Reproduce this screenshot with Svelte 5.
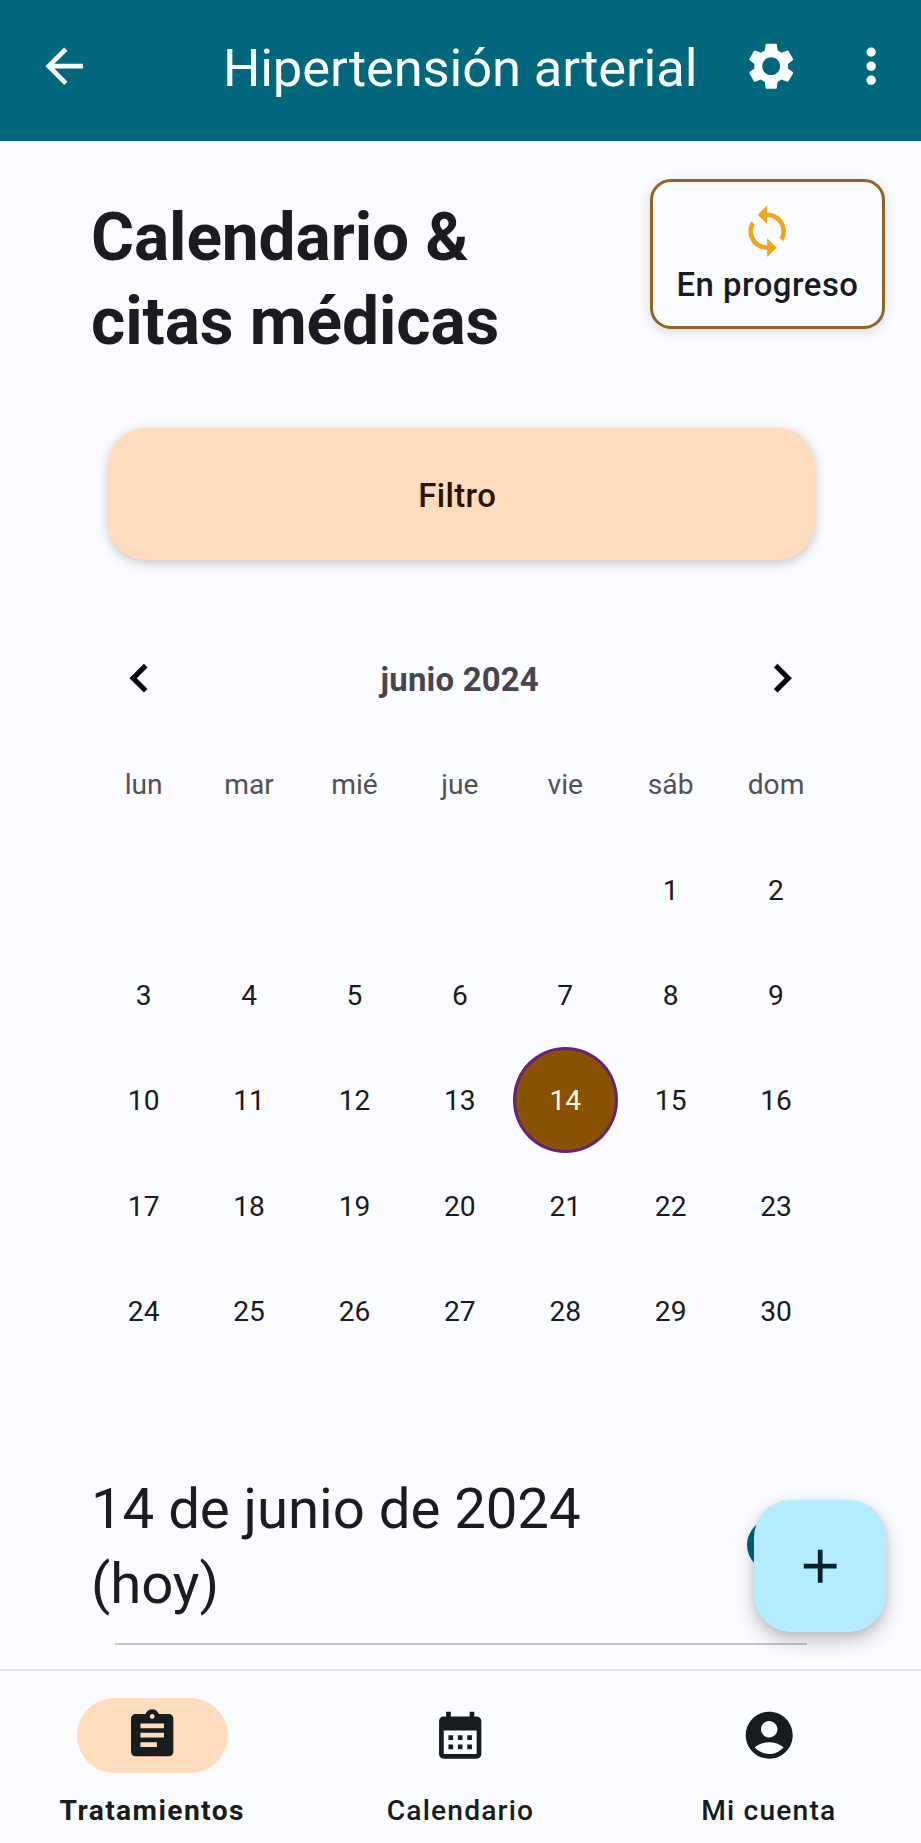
<script>
  const weekdays = ['lun', 'mar', 'mié', 'jue', 'vie', 'sáb', 'dom'];
  const leading = 5;
  const cells = [
    ...Array.from({ length: leading }, () => null),
    ...Array.from({ length: 30 }, (_, i) => i + 1)
  ];
  let selected = $state(14);

  const tabs = [
    {
      label: 'Tratamientos',
      icon: 'M19 3h-4.18C14.4 1.84 13.3 1 12 1s-2.4.84-2.82 2H5c-1.1 0-2 .9-2 2v14c0 1.1.9 2 2 2h14c1.1 0 2-.9 2-2V5c0-1.1-.9-2-2-2zm-7 0c.55 0 1 .45 1 1s-.45 1-1 1-1-.45-1-1 .45-1 1-1zm2 14H7v-2h7v2zm3-4H7v-2h10v2zm0-4H7V7h10v2z'
    },
    {
      label: 'Calendario',
      icon: 'M19 4h-1V2h-2v2H8V2H6v2H5c-1.11 0-1.99.9-1.99 2L3 20c0 1.1.89 2 2 2h14c1.1 0 2-.9 2-2V6c0-1.1-.9-2-2-2zm0 16H5V10h14v10zM9 14H7v-2h2v2zm4 0h-2v-2h2v2zm4 0h-2v-2h2v2zm-8 4H7v-2h2v2zm4 0h-2v-2h2v2zm4 0h-2v-2h2v2z'
    },
    {
      label: 'Mi cuenta',
      icon: 'M12 2C6.48 2 2 6.48 2 12s4.48 10 10 10 10-4.48 10-10S17.52 2 12 2zm0 4c1.93 0 3.5 1.57 3.5 3.5S13.93 13 12 13s-3.5-1.57-3.5-3.5S10.07 6 12 6zm0 14c-2.03 0-4.43-.82-6.14-2.88C7.55 15.8 9.68 15 12 15s4.45.8 6.14 2.12C16.43 19.18 14.03 20 12 20z'
    }
  ];
  let active = $state('Tratamientos');
</script>

{#snippet icon(d)}
  <svg class="icon" viewBox="0 0 24 24" aria-hidden="true"><path {d} /></svg>
{/snippet}

<div class="app">
  <header class="bar">
    <button>{@render icon('M20 11H7.83l5.59-5.59L12 4l-8 8 8 8 1.41-1.41L7.83 13H20v-2z')}</button>
    <span class="bar-title">Hipertensión arterial</span>
    <button>{@render icon('M19.14 12.94c.04-.3.06-.61.06-.94 0-.32-.02-.64-.07-.94l2.03-1.58c.18-.14.23-.41.12-.61l-1.92-3.32c-.12-.22-.37-.29-.59-.22l-2.39.96c-.5-.38-1.03-.7-1.62-.94l-.36-2.54c-.04-.24-.24-.41-.48-.41h-3.84c-.24 0-.43.17-.47.41l-.36 2.54c-.59.24-1.13.57-1.62.94l-2.39-.96c-.22-.08-.47 0-.59.22L2.74 8.87c-.12.21-.08.47.12.61l2.03 1.58c-.05.3-.09.63-.09.94s.02.64.07.94l-2.03 1.58c-.18.14-.23.41-.12.61l1.92 3.32c.12.22.37.29.59.22l2.39-.96c.5.38 1.03.7 1.62.94l.36 2.54c.05.24.24.41.48.41h3.84c.24 0 .44-.17.47-.41l.36-2.54c.59-.24 1.13-.56 1.62-.94l2.39.96c.22.08.47 0 .59-.22l1.92-3.32c.12-.22.07-.47-.12-.61l-2.01-1.58zM12 15.8c-2.1 0-3.8-1.7-3.8-3.8s1.7-3.8 3.8-3.8 3.8 1.7 3.8 3.8-1.7 3.8-3.8 3.8z')}</button>
    <button>{@render icon('M12 8c1.1 0 2-.9 2-2s-.9-2-2-2-2 .9-2 2 .9 2 2 2zm0 2c-1.1 0-2 .9-2 2s.9 2 2 2 2-.9 2-2-.9-2-2-2zm0 6c-1.1 0-2 .9-2 2s.9 2 2 2 2-.9 2-2-.9-2-2-2z')}</button>
  </header>

  <main>
    <section class="heading">
      <h1>Calendario &amp;<br />citas médicas</h1>
      <div class="status">
        {@render icon('M12 4V1L8 5l4 4V6c3.31 0 6 2.69 6 6 0 1.01-.25 1.97-.7 2.8l1.46 1.46C19.54 15.03 20 13.57 20 12c0-4.42-3.58-8-8-8zm0 14c-3.31 0-6-2.69-6-6 0-1.01.25-1.97.7-2.8L5.24 7.74C4.46 8.97 4 10.43 4 12c0 4.42 3.58 8 8 8v3l4-4-4-4v3z')}
        <span>En progreso</span>
      </div>
    </section>

    <button class="filter">Filtro</button>

    <section class="calendar">
      <div class="month">
        <button>{@render icon('M15.41 7.41L14 6l-6 6 6 6 1.41-1.41L10.83 12z')}</button>
        <strong>junio 2024</strong>
        <button>{@render icon('M10 6L8.59 7.41 13.17 12l-4.58 4.59L10 18l6-6z')}</button>
      </div>
      <div class="grid">
        {#each weekdays as day}
          <span class="weekday">{day}</span>
        {/each}
        {#each cells as day}
          {#if day}
            <button class="day" class:selected={day === selected} onclick={() => (selected = day)}>{day}</button>
          {:else}
            <span></span>
          {/if}
        {/each}
      </div>
    </section>

    <section class="agenda">
      <h2>14 de junio de 2024<br />(hoy)</h2>
      <span class="dot"></span>
    </section>
    <hr />
    <button class="fab" aria-label="+">{@render icon('M19 13h-6v6h-2v-6H5v-2h6V5h2v6h6v2z')}</button>
  </main>

  <nav>
    {#each tabs as tab}
      <button class="tab" class:active={tab.label === active} onclick={() => (active = tab.label)}>
        <span class="pill">{@render icon(tab.icon)}</span>
        <span class="label">{tab.label}</span>
      </button>
    {/each}
  </nav>
</div>

<style>
  :global(body) {
    margin: 0;
    background: #fbfcff;
  }
  .app {
    display: flex;
    flex-direction: column;
    width: 921px;
    height: 1843px;
    overflow: hidden;
    box-sizing: border-box;
    font-family: Roboto, sans-serif;
    color: #191c1d;
    background: #fbfcff;
  }
  button {
    border: 0;
    padding: 0;
    background: none;
    font: inherit;
    color: inherit;
    display: flex;
    align-items: center;
    justify-content: center;
  }
  .icon {
    display: block;
    flex: none;
    width: 56.4px;
    height: 56.4px;
    fill: currentColor;
  }

  .bar {
    display: flex;
    align-items: center;
    flex: none;
    height: 141px;
    box-sizing: border-box;
    padding: 0 21px 9px 35.5px;
    background: #00677d;
    color: #fbfcff;
  }
  .bar-title {
    margin-left: 131px;
    width: 520px;
    font-size: 52.5px;
    line-height: 66px;
    letter-spacing: -0.12px;
    padding-top: 4px;
    white-space: nowrap;
  }
  .bar button + button {
    margin-left: 43.5px;
  }

  main {
    position: relative;
    flex: 1;
    display: flex;
    flex-direction: column;
  }
  .heading {
    display: flex;
    justify-content: space-between;
    align-items: flex-start;
    height: 286.5px;
    box-sizing: border-box;
    padding: 38px 36px 0 91px;
  }
  h1 {
    margin: 16.5px 0 0;
    font-size: 65.8px;
    line-height: 84.6px;
    letter-spacing: -0.1px;
    font-weight: 700;
    color: #1d1b20;
  }
  .status {
    box-sizing: border-box;
    width: 235px;
    height: 150px;
    padding-top: 20.5px;
    display: flex;
    flex-direction: column;
    align-items: center;
    border: 3px solid #8f6427;
    border-radius: 21px;
    box-shadow: 0 3px 12px rgba(0, 0, 0, 0.14);
    background: #fbfcff;
  }
  .status .icon {
    color: #f4a31b;
  }
  .status span {
    margin-top: 7px;
    font-size: 32.9px;
    line-height: 38px;
    letter-spacing: 0.5px;
    font-weight: 500;
    white-space: nowrap;
  }

  .filter {
    flex: none;
    margin: 0 106px 0 107.5px;
    height: 132px;
    box-sizing: border-box;
    padding: 3px 8px 0 0;
    border-radius: 37.6px;
    background: #ffdcbe;
    color: #2c1200;
    font-size: 32.9px;
    letter-spacing: 0.4px;
    font-weight: 500;
    box-shadow: 0 3px 12px rgba(0, 0, 0, 0.22);
  }

  .calendar {
    margin: 65px 92px 0 91px;
  }
  .month {
    display: flex;
    align-items: center;
    justify-content: space-between;
    height: 107px;
    padding: 0 18.5px 0 20px;
    color: #000;
  }
  .month .icon {
    stroke: currentColor;
    stroke-width: 0.25;
  }
  .month strong {
    font-size: 32.9px;
    font-weight: 700;
    letter-spacing: 0.2px;
    color: #49454f;
    padding: 3px 2px 0 0;
  }
  .grid {
    display: grid;
    grid-template-columns: repeat(7, 105.4px);
    grid-auto-rows: 105.3px;
  }
  .weekday,
  .day {
    display: flex;
    align-items: center;
    justify-content: center;
    font-size: 28.2px;
  }
  .weekday {
    color: #535156;
  }
  .day {
    color: #1b1b1d;
    box-sizing: border-box;
    padding-top: 1.5px;
    border-radius: 50%;
  }
  .selected {
    background: #885200;
    border: 3px solid #68217a;
    color: #fffbe9;
  }

  .agenda {
    display: flex;
    align-items: center;
    justify-content: space-between;
    margin: 107px 122px 0 91px;
    height: 150.4px;
  }
  h2 {
    margin: 0;
    padding-top: 4px;
    font-size: 56.4px;
    line-height: 75.2px;
    letter-spacing: -0.08px;
    font-weight: 400;
    color: #1d1b20;
  }
  .dot {
    width: 52px;
    height: 52px;
    border-radius: 50%;
    background: #00677d;
  }
  hr {
    width: 692px;
    height: 2.4px;
    border: 0;
    margin: 22px 0 0 115px;
    background: #c6c6cb;
  }
  .fab {
    position: absolute;
    right: 35px;
    bottom: 36.5px;
    width: 132px;
    height: 132px;
    border-radius: 37.6px;
    background: #b3ebff;
    color: #001f27;
    box-shadow: 0 9px 20px rgba(0, 0, 0, 0.22), 0 2px 8px rgba(0, 0, 0, 0.1);
  }

  nav {
    flex: none;
    display: flex;
    gap: 4px;
    height: 174.5px;
    box-sizing: border-box;
    border-top: 2px solid #e1e2e6;
    padding-top: 27.5px;
  }
  .tab {
    flex: 1;
    flex-direction: column;
    justify-content: flex-start;
  }
  .pill {
    display: flex;
    align-items: center;
    justify-content: center;
    width: 151px;
    height: 75.2px;
    border-radius: 38px;
  }
  .active .pill {
    background: #ffdcbe;
  }
  .label {
    margin-top: 18.5px;
    font-size: 28.2px;
    line-height: 38px;
    font-weight: 500;
    letter-spacing: 1.17px;
  }
  .active .label {
    font-weight: 700;
    letter-spacing: 1.4px;
  }
</style>
